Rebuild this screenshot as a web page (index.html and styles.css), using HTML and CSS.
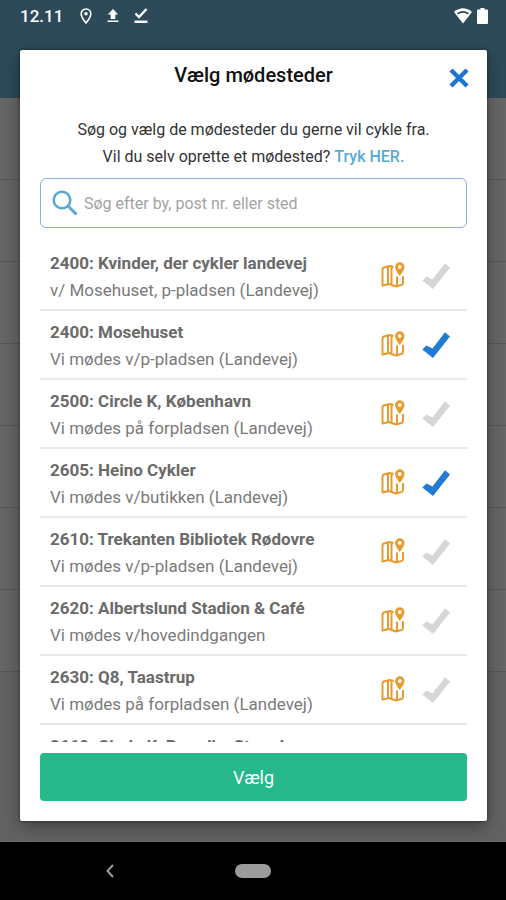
FILE: index.html
```html
<!DOCTYPE html>
<html lang="da">
<head>
<meta charset="utf-8">
<meta name="viewport" content="width=device-width, initial-scale=1">
<title>Vælg mødesteder</title>
<link rel="stylesheet" href="styles.css">
</head>
<body>
<svg class="symbols" aria-hidden="true">
  <symbol id="map" viewBox="0 0 24 26">
    <path d="M12.500 5 8.500 4 3 5.500Q1.500 6 1.500 7.500V23.500L8 22 15 24.500 20.500 23Q22 22.500 22 21V14M7 5V21.500M10.500 5V21.800M16 14.500V23.500" fill="none" stroke="currentColor" stroke-width="2" stroke-linejoin="round"/>
    <path fill-rule="evenodd" d="M18.800 0.300a4.700 4.700 0 0 0-4.700 4.700c0 3.300 4.700 9 4.700 9s4.700-5.700 4.700-9a4.700 4.700 0 0 0-4.700-4.700zm0 2.800a1.900 1.900 0 1 1 0 3.800 1.900 1.900 0 0 1 0-3.800z" fill="currentColor"/>
  </symbol>
  <symbol id="check" viewBox="0 0 28 26">
    <path d="M0.300 17.500 4.500 13.500 10.500 16.500 23 0.300 28 4.500 11 26z" fill="currentColor"/>
  </symbol>
</svg>
<div class="screen">
  <div class="backdrop" aria-hidden="true">
    <div class="backdrop-bar"></div>
    <div class="backdrop-rows"></div>
  </div>
  <header class="status">
    <span class="clock">12.11</span>
    <svg class="status-icon pin" viewBox="0 0 12 16"><path d="M6 1a4.800 4.800 0 0 0-4.800 4.800C1.200 9.300 6 15 6 15s4.800-5.700 4.800-9.200A4.800 4.800 0 0 0 6 1z" fill="none" stroke="currentColor" stroke-width="1.600"/><circle cx="6" cy="5.800" r="1.800" fill="currentColor"/></svg>
    <svg class="status-icon upload" viewBox="0 0 12 16"><path d="M6 1 0.800 6.500H3.700V11H8.300V6.500h2.900zM0.500 12.500h11V14H0.500z" fill="currentColor"/></svg>
    <svg class="status-icon done" viewBox="0 0 14 16"><path d="m1.500 5.500 3.500 3.500 7.500-8" fill="none" stroke="currentColor" stroke-width="2.400"/><path d="M0.500 12.500h13v2.500h-13z" fill="currentColor"/></svg>
    <svg class="status-icon wifi" viewBox="0 0 18 16"><path d="M0 4Q9-3.500 18 4L9 15.500z" fill="currentColor"/><path d="M3.500 5.800Q9 2 14.500 5.800" fill="none" stroke="#2c4855" stroke-width="1.600"/></svg>
    <svg class="status-icon battery" viewBox="0 0 11 16"><path d="M3.500 0h4v1.500H10a1 1 0 0 1 1 1V15a1 1 0 0 1-1 1H1a1 1 0 0 1-1-1V2.500a1 1 0 0 1 1-1h2.500z" fill="currentColor"/></svg>
  </header>
  <main class="stage">
    <section class="dialog" role="dialog" aria-labelledby="title">
      <div class="heading">
        <h1 id="title">Vælg mødesteder</h1>
        <button class="close" type="button" aria-label="Luk"><svg viewBox="0 0 20 20"><path d="M2 2 18 18M18 2 2 18" stroke="currentColor" stroke-width="4.400"/></svg></button>
      </div>
      <p class="intro">Søg og vælg de mødesteder du gerne vil cykle fra.<br>Vil du selv oprette et mødested? <a href="#">Tryk HER.</a></p>
      <label class="search">
        <svg viewBox="0 0 26 26" aria-hidden="true"><circle cx="10" cy="10" r="8.300" fill="none" stroke="currentColor" stroke-width="2.600"/><path d="m16 16 8.500 8.500" stroke="currentColor" stroke-width="3"/></svg>
        <input type="search" aria-label="Søg" placeholder="Søg efter by, post nr. eller sted">
      </label>
      <ul class="places">
        <li class="place">
          <div class="text"><h2>2400: Kvinder, der cykler landevej</h2><p>v/ Mosehuset, p-pladsen (Landevej)</p></div>
          <button class="map" type="button" aria-label="Vis på kort"><svg><use href="#map"/></svg></button>
          <button class="check" type="button" aria-label="Vælg sted" aria-pressed="false"><svg><use href="#check"/></svg></button>
        </li>
        <li class="place">
          <div class="text"><h2>2400: Mosehuset</h2><p>Vi mødes v/p-pladsen (Landevej)</p></div>
          <button class="map" type="button" aria-label="Vis på kort"><svg><use href="#map"/></svg></button>
          <button class="check" type="button" aria-label="Vælg sted" aria-pressed="true"><svg><use href="#check"/></svg></button>
        </li>
        <li class="place">
          <div class="text"><h2>2500: Circle K, København</h2><p>Vi mødes på forpladsen (Landevej)</p></div>
          <button class="map" type="button" aria-label="Vis på kort"><svg><use href="#map"/></svg></button>
          <button class="check" type="button" aria-label="Vælg sted" aria-pressed="false"><svg><use href="#check"/></svg></button>
        </li>
        <li class="place">
          <div class="text"><h2>2605: Heino Cykler</h2><p>Vi mødes v/butikken (Landevej)</p></div>
          <button class="map" type="button" aria-label="Vis på kort"><svg><use href="#map"/></svg></button>
          <button class="check" type="button" aria-label="Vælg sted" aria-pressed="true"><svg><use href="#check"/></svg></button>
        </li>
        <li class="place">
          <div class="text"><h2>2610: Trekanten Bibliotek Rødovre</h2><p>Vi mødes v/p-pladsen (Landevej)</p></div>
          <button class="map" type="button" aria-label="Vis på kort"><svg><use href="#map"/></svg></button>
          <button class="check" type="button" aria-label="Vælg sted" aria-pressed="false"><svg><use href="#check"/></svg></button>
        </li>
        <li class="place">
          <div class="text"><h2>2620: Albertslund Stadion &amp; Café</h2><p>Vi mødes v/hovedindgangen</p></div>
          <button class="map" type="button" aria-label="Vis på kort"><svg><use href="#map"/></svg></button>
          <button class="check" type="button" aria-label="Vælg sted" aria-pressed="false"><svg><use href="#check"/></svg></button>
        </li>
        <li class="place">
          <div class="text"><h2>2630: Q8, Taastrup</h2><p>Vi mødes på forpladsen (Landevej)</p></div>
          <button class="map" type="button" aria-label="Vis på kort"><svg><use href="#map"/></svg></button>
          <button class="check" type="button" aria-label="Vælg sted" aria-pressed="false"><svg><use href="#check"/></svg></button>
        </li>
        <li class="place">
          <div class="text"><h2>2660: Circle K, Brøndby Strand</h2></div>
        </li>
      </ul>
      <button class="submit" type="button">Vælg</button>
    </section>
  </main>
  <nav class="navbar">
    <button class="back" type="button" aria-label="Tilbage"><svg viewBox="0 0 8 14"><path d="M7 1 1.500 7 7 13" fill="none" stroke="currentColor" stroke-width="2"/></svg></button>
    <button class="home" type="button" aria-label="Hjem"></button>
    <span></span>
  </nav>
</div>
</body>
</html>
```
FILE: styles.css
```css
* { box-sizing: border-box; }
body, h1, h2, p, ul { margin: 0; padding: 0; }
body { font-family: Roboto, "Liberation Sans", sans-serif; font-size: 16px; color: #333; }
button { border: 0; padding: 0; background: none; font: inherit; color: inherit; }
svg { display: block; }
.symbols { position: absolute; width: 0; height: 0; }

.screen { position: relative; height: 100vh; display: flex; flex-direction: column; overflow: hidden; }
.backdrop { position: absolute; inset: 0; z-index: -1; display: flex; flex-direction: column; background: #626262; }
.backdrop-bar { height: 98px; background: #2c4a58; }
.backdrop-rows { height: 574px; background: repeating-linear-gradient(#656565 0 81px, #565656 81px 82px); }

.status { height: 30px; padding: 2px 18px 0 20px; display: flex; align-items: center; color: #fff; }
.clock { font-size: 17px; font-weight: 500; margin-right: 17px; }
.status-icon { height: 16px; }
.pin { width: 12px; margin-right: 15px; }
.upload { width: 12px; margin-right: 15px; }
.done { width: 14px; }
.wifi { width: 18px; margin-left: auto; margin-right: 5px; }
.battery { width: 11px; }

.stage { flex: 1; min-height: 0; padding: 20px 19px 21px 20px; display: flex; }
.dialog { flex: 1; min-width: 0; padding: 12px 20px 20px; display: flex; flex-direction: column; background: #fff; border-radius: 2px; box-shadow: 0 6px 16px rgba(0, 0, 0, .35), 0 0 3px rgba(0, 0, 0, .5); }
.heading { position: relative; text-align: center; }
h1 { font-size: 20px; line-height: 26px; font-weight: 500; color: #111; }
.close { position: absolute; right: -2px; top: 6px; color: #1c76cf; }
.close svg { width: 20px; height: 20px; }
.intro { margin-top: 28px; line-height: 27px; text-align: center; white-space: nowrap; }
.intro a { color: #58abd0; font-weight: 500; text-decoration: none; }
.search { height: 50px; margin-top: 8px; padding: 0 11px; display: flex; align-items: center; gap: 6px; flex: none; border: 1px solid #8fadde; border-radius: 6px; color: #58abd0; }
.search svg { width: 26px; height: 26px; }
.search input { flex: 1; min-width: 0; border: 0; padding: 0; outline: 0; background: none; font: inherit; color: #222; }
.search input::placeholder { color: #a3a3a3; }

.places { flex: 1; min-height: 0; margin-top: 14px; overflow: hidden; list-style: none; }
.place { height: 69px; padding: 8px 17px 5px 10px; display: flex; align-items: flex-start; border-bottom: 2px solid #e8e8e8; }
.text { flex: 1; min-width: 0; line-height: 27px; white-space: nowrap; color: #7a7a7a; font-size: 17px; }
h2 { font-size: 17px; line-height: 27px; font-weight: 700; color: #6a6a6a; }
.map { margin: 12px 17px 0 0; color: #e99a2c; }
.map svg { width: 24px; height: 26px; }
.check { margin-top: 13px; color: #d6d6d6; }
.check[aria-pressed="true"] { color: #217bd2; }
.check svg { width: 28px; height: 26px; }
.submit { height: 48px; margin-top: 11px; flex: none; border-radius: 4px; background: #26b88b; color: #fff; font-size: 18px; }

.navbar { height: 58px; display: grid; grid-template-columns: 1fr 36px 1fr; align-items: center; background: #000; color: #9c9c9c; }
.back { justify-self: center; margin-right: 16px; }
.back svg { width: 8px; height: 14px; }
.home { height: 14px; border-radius: 7px; background: #9c9c9c; }
```
